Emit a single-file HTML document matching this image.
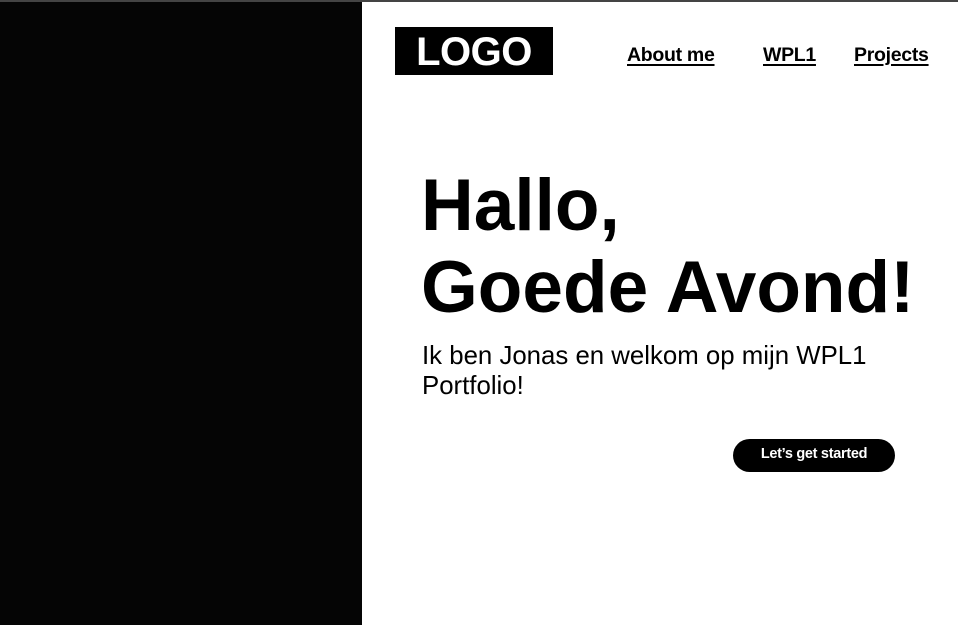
<!DOCTYPE html>
<html><head><meta charset="utf-8"><style>
*{margin:0;padding:0;box-sizing:border-box}
html,body{width:958px;height:625px;overflow:hidden;background:#fff;font-family:"Liberation Sans",sans-serif;color:#000}
.top{position:absolute;left:0;top:0;width:958px;height:2px;background:#444}
.panel{position:absolute;left:0;top:2px;width:362px;height:623px;background:#050505}
.logo{position:absolute;left:395px;top:27px;width:158px;height:48px;background:#000;color:#fff;font-weight:bold;font-size:40px;line-height:50px;text-align:center;letter-spacing:-0.5px}
.nav a{position:absolute;top:43px;font-weight:bold;font-size:19.5px;line-height:24px;color:#000;text-decoration:underline;text-underline-offset:3px;text-decoration-thickness:2px;letter-spacing:-0.3px}
h1{position:absolute;left:421px;top:165px;font-size:73px;line-height:82px;font-weight:bold;letter-spacing:0;white-space:nowrap}
p{position:absolute;left:422px;top:341px;font-size:25.8px;line-height:30px;width:500px}
.btn{position:absolute;left:733px;top:439px;width:162px;height:33px;border-radius:17px;background:#000;color:#fff;font-weight:bold;font-size:14.5px;line-height:31px;text-align:center;letter-spacing:-0.3px}
</style></head><body>
<div class="top"></div>
<div class="panel"></div>
<div class="logo">LOGO</div>
<div class="nav">
<a style="left:627px">About me</a>
<a style="left:763px">WPL1</a>
<a style="left:854px">Projects</a>
</div>
<h1>Hallo,<br>Goede Avond!</h1>
<p>Ik ben Jonas en welkom op mijn WPL1<br>Portfolio!</p>
<div class="btn">Let’s get started</div>
</body></html>
